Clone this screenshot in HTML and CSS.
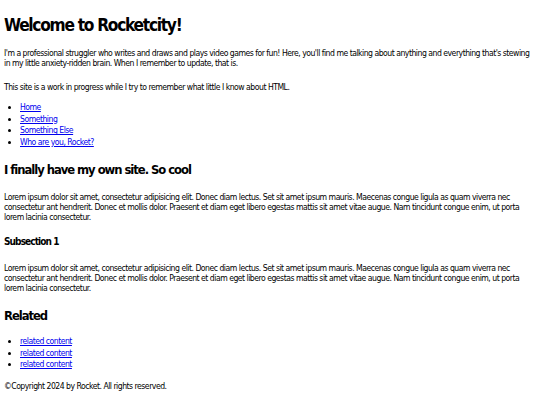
FILE: index.html
```html
<!DOCTYPE html>
<html lang="en">
<head>
<meta charset="utf-8">
<title>Rocketcity</title>
<link rel="stylesheet" href="styles.css">
</head>
<body class="page">
<header>
<h1 class="title">Welcome to Rocketcity!</h1>
<p class="text intro">I'm a professional struggler who writes and draws and plays video games for fun! Here, you'll find me talking about anything and everything that's stewing in my little anxiety-ridden brain. When I remember to update, that is.</p>
<p class="text note">This site is a work in progress while I try to remember what little I know about HTML.</p>
<ul class="links nav">
<li><a href="#">Home</a></li>
<li><a href="#">Something</a></li>
<li><a href="#">Something Else</a></li>
<li><a href="#">Who are you, Rocket?</a></li>
</ul>
</header>
<main>
<h2 class="section-title first">I finally have my own site. So cool</h2>
<p class="text lorem">Lorem ipsum dolor sit amet, consectetur adipisicing elit. Donec diam lectus. Set sit amet ipsum mauris. Maecenas congue ligula as quam viverra nec consectetur ant hendrerit. Donec et mollis dolor. Praesent et diam eget libero egestas mattis sit amet vitae augue. Nam tincidunt congue enim, ut porta lorem lacinia consectetur.</p>
<h3 class="sub-title">Subsection 1</h3>
<p class="text lorem2">Lorem ipsum dolor sit amet, consectetur adipisicing elit. Donec diam lectus. Set sit amet ipsum mauris. Maecenas congue ligula as quam viverra nec consectetur ant hendrerit. Donec et mollis dolor. Praesent et diam eget libero egestas mattis sit amet vitae augue. Nam tincidunt congue enim, ut porta lorem lacinia consectetur.</p>
<h2 class="section-title related">Related</h2>
<ul class="links rel-list">
<li><a href="#">related content</a></li>
<li><a href="#">related content</a></li>
<li><a href="#">related content</a></li>
</ul>
</main>
<footer class="footer">©Copyright 2024 by Rocket. All rights reserved.</footer>
</body>
</html>
```
FILE: styles.css
```css
html { background: #fff; }
.page {
  margin: 0;
  padding: 0 4px;
  font-family: "DejaVu Sans Condensed", "DejaVu Sans", sans-serif;
  font-size: 8.6px;
  line-height: 10px;
  letter-spacing: -0.058em;
  color: #000;
}
.title {
  font-size: 17.2px;
  line-height: 20px;
  letter-spacing: -0.075em;
  font-weight: bold;
  margin: 14.5px 0 0;
}
.section-title {
  font-size: 12.9px;
  line-height: 15px;
  letter-spacing: -0.08em;
  font-weight: bold;
  margin: 0;
}
.sub-title {
  font-size: 10px;
  line-height: 12px;
  letter-spacing: -0.09em;
  font-weight: bold;
  margin: 14px 0 0;
}
.text { margin: 0; }
.intro { margin-top: 13.5px; }
.note { margin-top: 14px; }
.nav { margin-top: 10px; }
.first { margin-top: 13.6px; }
.lorem { margin-top: 14.5px; }
.lorem2 { margin-top: 15px; }
.related { margin-top: 15.5px; }
.rel-list { margin-top: 12.7px; }
.links { margin-bottom: 0; padding-left: 16px; }
.links li { line-height: 11.67px; }
.links a { color: #0000ee; }
.footer { margin-top: 10px; }
```
